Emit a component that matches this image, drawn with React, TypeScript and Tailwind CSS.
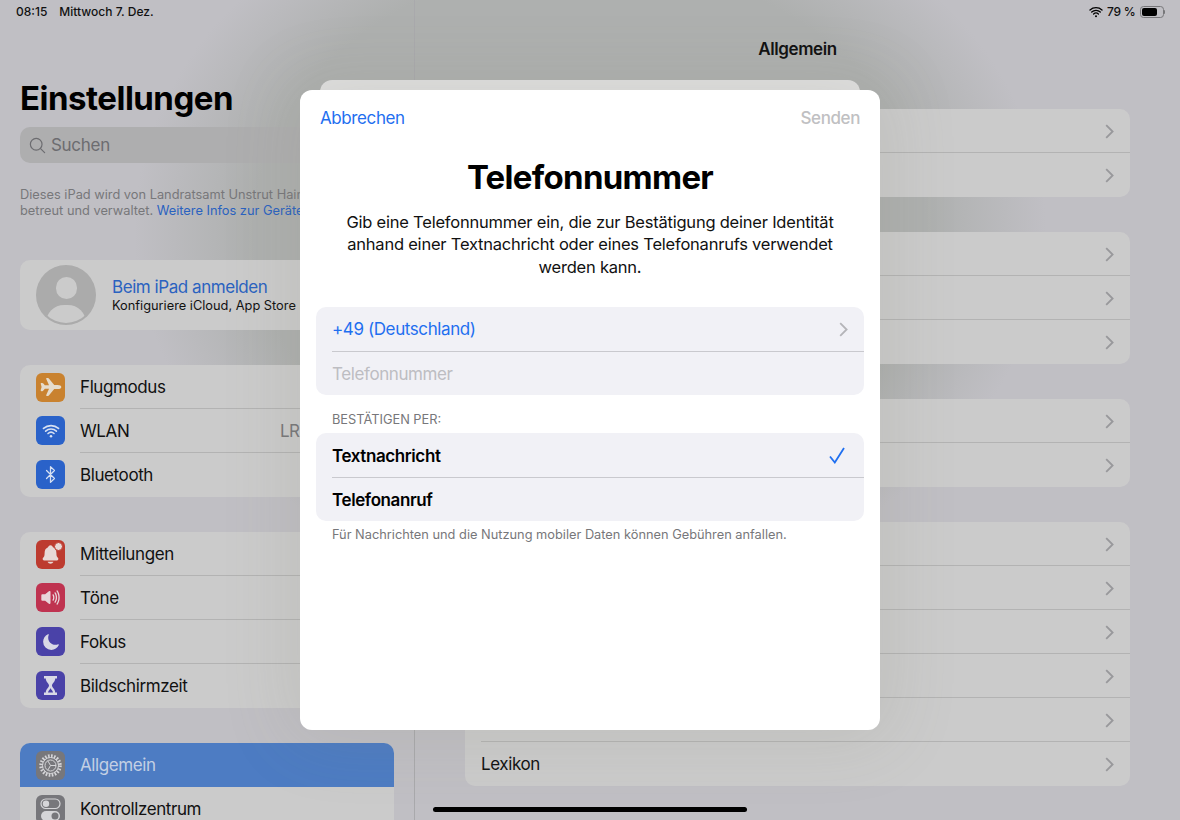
import { ReactNode } from "react";
import { Bluetooth } from "lucide-react";
import { IoAirplane, IoMoon, IoNotifications, IoSearchOutline, IoVolumeHigh, IoWifi } from "react-icons/io5";

const Chevron = ({ className }: { className: string }) => (
  <svg width="9" height="15" viewBox="0 0 9 15" fill="none" className={className}>
    <path d="M1.2 1.2 7.6 7.5 1.2 13.8" stroke="currentColor" strokeWidth="1.8" />
  </svg>
);

const Hourglass = () => (
  <svg width="17" height="21" viewBox="0 0 17 21" fill="none">
    <path d="M2 1h13v2.500H13.200c0 3.500-3.200 5-3.200 7s3.200 3.500 3.200 7H15V20H2v-2.500h1.800c0-3.500 3.200-5 3.200-7s-3.200-3.500-3.200-7H2z" fill="#d9d9e6" />
    <path d="M6 17.500c0-1.800 2.500-3.200 2.500-4.500 0 1.300 2.500 2.700 2.500 4.500z" fill="#4a42a8" />
  </svg>
);

const Gear = () => (
  <svg width="25" height="25" viewBox="0 0 25 25" fill="none" stroke="#d5d5d8">
    <circle cx="12.500" cy="12.500" r="9.500" strokeWidth="3.500" strokeDasharray="1.600 1.400" />
    <circle cx="12.500" cy="12.500" r="8" strokeWidth="1" />
    <circle cx="12.500" cy="12.500" r="5.500" strokeWidth="1" />
    <path d="M12.500 12.500 9.800 7.800M12.500 12.500 9.800 17.200M12.500 12.500H18" strokeWidth="1" />
  </svg>
);

const Toggles = () => (
  <svg width="21" height="25" viewBox="0 0 21 25" fill="none">
    <rect x="1" y="2" width="19" height="9.500" rx="4.750" stroke="#d5d5d8" strokeWidth="1.200" />
    <circle cx="6" cy="6.750" r="3.200" fill="#d5d5d8" />
    <rect x="1" y="14" width="19" height="10" rx="5" fill="#d5d5d8" />
    <circle cx="15" cy="19" r="3.500" fill="#77777b" />
  </svg>
);

const BellWithDot = () => (
  <div className="relative flex">
    <IoNotifications size={21} color="#e8d9d6" />
    <span className="absolute -right-[2px] -top-[2px] h-[9px] w-[9px] rounded-full border border-[#bd3b2f] bg-[#e8d9d6]" />
  </div>
);

type SideRow = { label: string; tile: string; icon: ReactNode; value?: string };

const groupOne: SideRow[] = [
  { label: "Flugmodus", tile: "bg-[#c9822f]", icon: <IoAirplane size={22} color="#e6dccb" /> },
  { label: "WLAN", tile: "bg-[#2a62c9]", icon: <IoWifi size={20} color="#d6e0f2" />, value: "LRA" },
  { label: "Bluetooth", tile: "bg-[#2a62c9]", icon: <Bluetooth size={19} color="#d6e0f2" strokeWidth={1.6} /> },
];

const groupTwo: SideRow[] = [
  { label: "Mitteilungen", tile: "bg-[#bd3b2f]", icon: <BellWithDot /> },
  { label: "Töne", tile: "bg-[#bf3350]", icon: <IoVolumeHigh size={21} color="#e8d5da" /> },
  { label: "Fokus", tile: "bg-[#4a42a8]", icon: <IoMoon size={18} color="#d9d9e6" /> },
  { label: "Bildschirmzeit", tile: "bg-[#4a42a8]", icon: <Hourglass /> },
];

const Tile = ({ tile, children }: { tile: string; children: ReactNode }) => (
  <div className={`flex h-[29px] w-[29px] shrink-0 items-center justify-center overflow-hidden rounded-[6px] ${tile}`}>{children}</div>
);

const SidebarGroup = ({ rows }: { rows: SideRow[] }) => (
  <div className="mx-5 overflow-hidden rounded-[10px] bg-[#cbcbcb]">
    {rows.map((row, i) => (
      <div key={row.label} className={`flex items-center pl-4 ${i > 0 ? "-mt-px h-[45px]" : "h-[44px]"}`}>
        <Tile tile={row.tile}>{row.icon}</Tile>
        <div className={`ml-[15px] flex h-full flex-1 items-center pt-px text-[17px] tracking-[-0.4px] text-[#111] ${i > 0 ? "border-t border-[#b3b3b3]" : ""}`}>
          <span className="flex-1">{row.label}</span>
          {row.value && <span className="mr-[83px] text-[#77777a]">{row.value}</span>}
        </div>
      </div>
    ))}
  </div>
);

const rightGroups = [2, 3, 2, 6];

const Sidebar = () => (
  <div className="h-full w-[415px] shrink-0 overflow-hidden border-r border-[#a9a9ac]">
    <div className="flex h-[24px] items-center gap-[12px] pl-4 text-[12px] font-medium text-[#111]">
      <span>08:15</span>
      <span>Mittwoch 7. Dez.</span>
    </div>
    <h1 className="ml-5 mt-[53px] text-[33px] font-bold leading-[42px] tracking-[-0.5px] text-black">Einstellungen</h1>
    <div className="mx-5 mt-[8px] flex h-[36px] items-center rounded-[10px] bg-[#aeaeaf] pl-2 text-[#6c6c70]">
      <IoSearchOutline size={19} />
      <span className="ml-[4px] pt-px text-[17px] tracking-[-0.3px]">Suchen</span>
    </div>
    <p className="ml-5 mt-[24px] whitespace-nowrap text-[12.800px] leading-[16px] text-[#77777a]">
      Dieses iPad wird von Landratsamt Unstrut Hainich Kreis
      <br />
      betreut und verwaltet. <span className="text-[#2a62c0]">Weitere Infos zur Geräteverwaltung</span>
    </p>
    <div className="mx-5 mt-[41px] flex h-[70px] items-center rounded-[10px] bg-[#cbcbcb] pl-4">
      <div className="relative h-[60px] w-[60px] shrink-0 rounded-full bg-[#ababab]">
        <div className="absolute left-[20px] top-[12px] h-[22px] w-[21px] rounded-full bg-[#cbcbcb]" />
        <div className="absolute inset-[2px] overflow-hidden rounded-full">
          <div className="absolute left-[8px] top-[38px] h-[36px] w-[40px] rounded-full bg-[#cbcbcb]" />
        </div>
      </div>
      <div className="ml-4 whitespace-nowrap">
        <div className="text-[17px] leading-[21px] tracking-[-0.45px] text-[#2a62c0]">Beim iPad anmelden</div>
        <div className="text-[12.800px] leading-[16px] text-[#111]">Konfiguriere iCloud, App Store und mehr.</div>
      </div>
    </div>
    <div className="mt-[35px]">
      <SidebarGroup rows={groupOne} />
    </div>
    <div className="mt-[35px]">
      <SidebarGroup rows={groupTwo} />
    </div>
    <div className="mx-5 mt-[35px] overflow-hidden rounded-t-[10px] bg-[#cbcbcb]">
      <div className="flex h-[44px] items-center bg-[#4d7cc3] pl-4">
        <Tile tile="bg-[#77777b]">
          <Gear />
        </Tile>
        <span className="ml-[15px] pt-px text-[17px] tracking-[-0.4px] text-[#c3d0e4]">Allgemein</span>
      </div>
      <div className="flex h-[44px] items-center pl-4">
        <Tile tile="bg-[#77777b]">
          <Toggles />
        </Tile>
        <span className="ml-[15px] pt-px text-[17px] tracking-[-0.4px] text-[#111]">Kontrollzentrum</span>
      </div>
    </div>
  </div>
);

const DetailPane = () => (
  <div className="h-full flex-1">
    <div className="flex h-[24px] items-center justify-end pr-[15px] text-[12px] font-medium text-[#111]">
      <IoWifi size={16} color="#000" />
      <span className="ml-[3px] tracking-[-0.2px]">79 %</span>
      <div className="ml-[4px] flex items-center">
        <div className="flex h-[12px] w-[24px] items-center rounded-[3.500px] border border-[#77777a] p-[1px]">
          <div className="h-full w-[79%] rounded-[2px] bg-black" />
        </div>
        <div className="h-[4px] w-[1.500px] rounded-r-full bg-[#77777a]" />
      </div>
    </div>
    <div className="mt-[11px] flex h-[30px] items-center justify-center text-[17px] font-semibold tracking-[-0.4px] text-[#111]">Allgemein</div>
    <div className="mx-[50px] mt-[44px] flex flex-col gap-[35px]">
      {rightGroups.map((count, g) => (
        <div key={g} className="rounded-[10px] bg-[#cbcbcb]">
          {Array.from({ length: count }).map((_, i) => (
            <div key={i} className={`flex items-center pl-4 ${i > 0 ? "-mt-px h-[45px]" : "h-[44px]"}`}>
              <div className={`flex h-full flex-1 items-center pr-[16px] ${i > 0 ? "border-t border-[#b3b3b3]" : ""}`}>
                <span className="flex-1 pt-px text-[17px] tracking-[-0.4px] text-[#111]">{g === 3 && i === 5 ? "Lexikon" : ""}</span>
                <Chevron className="text-[#98989b]" />
              </div>
            </div>
          ))}
        </div>
      ))}
    </div>
  </div>
);

const PhoneSheet = () => (
  <div className="flex h-[640px] w-[580px] flex-col rounded-[12px] bg-white text-black">
    <div className="flex items-center justify-between px-5 pt-[16px] text-[17px] leading-[24px] tracking-[-0.4px]">
      <span className="text-[#1f6ff0]">Abbrechen</span>
      <span className="font-medium text-[#c0c0c2]">Senden</span>
    </div>
    <h2 className="mt-[26px] text-center text-[33px] font-bold leading-[42px] tracking-[-0.7px]">Telefonnummer</h2>
    <p className="mx-auto mt-[13px] w-[520px] text-center text-[16.500px] leading-[22.400px] tracking-[-0.22px] text-[#111]">
      Gib eine Telefonnummer ein, die zur Bestätigung deiner Identität
      <br />
      anhand einer Textnachricht oder eines Telefonanrufs verwendet
      <br />
      werden kann.
    </p>
    <div className="mx-4 mt-[29px] rounded-[10px] bg-[#f1f1f6] text-[17px] tracking-[-0.4px]">
      <div className="flex h-[44px] items-center px-4">
        <span className="flex-1 pt-[2px] text-[#1f6ff0]">+49 (Deutschland)</span>
        <Chevron className="text-[#b4b4b8]" />
      </div>
      <div className="ml-4 flex h-[44px] items-center border-t border-[#c9c9ce] pt-[3px] text-[#bdbdc2]">Telefonnummer</div>
    </div>
    <div className="ml-8 mt-[17px] h-[21px] text-[12.800px] leading-[16px] text-[#77777a]">BESTÄTIGEN PER:</div>
    <div className="mx-4 rounded-[10px] bg-[#f1f1f6] text-[17px] font-semibold tracking-[-0.4px]">
      <div className="flex h-[44px] items-center pl-4 pr-[19px]">
        <span className="flex-1 pt-[3px]">Textnachricht</span>
        <svg width="16" height="17" viewBox="0 0 16 17" fill="none">
          <path d="M1 9.500 5.800 15.500 15 1" stroke="#1f6ff0" strokeWidth="1.800" />
        </svg>
      </div>
      <div className="ml-4 flex h-[44px] items-center border-t border-[#c9c9ce] pt-[3px]">Telefonanruf</div>
    </div>
    <div className="ml-8 mt-[6px] text-[12.800px] leading-[16px] text-[#77777a]">Für Nachrichten und die Nutzung mobiler Daten können Gebühren anfallen.</div>
  </div>
);

export default function App() {
  return (
    <div className="relative flex h-[820px] w-[1180px] overflow-hidden bg-[#c0bfc4] bg-[radial-gradient(ellipse_480px_380px_at_590px_230px,#aeb0af_70%,#c0bfc4_95%)] font-['Inter','Noto_Sans',sans-serif]">
      <Sidebar />
      <DetailPane />
      {/* sheet stacked over the settings page */}
      <div className="absolute left-[320px] top-[80px] h-[200px] w-[540px] rounded-[12px] bg-[#e0e0e0]" />
      <div className="absolute left-[300px] top-[90px] rounded-[12px] shadow-[0_0_70px_10px_rgba(120,120,100,0.14)]">
        <PhoneSheet />
      </div>
      <div className="absolute bottom-[8px] left-[433px] h-[5px] w-[314px] rounded-full bg-black" />
    </div>
  );
}
